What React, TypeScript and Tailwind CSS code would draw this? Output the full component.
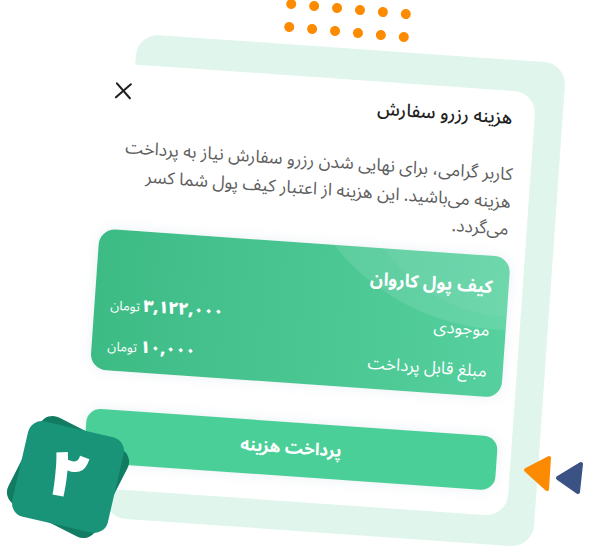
import { X } from "lucide-react";

const dots = Array.from({ length: 12 });

export default function App() {
  return (
    <div className="relative h-[556px] w-[592px] overflow-hidden bg-white font-['Noto_Sans_Arabic','DejaVu_Sans',sans-serif]">
      {/* orange dots */}
      <div className="absolute left-[285px] top-[4px] grid rotate-[5deg] grid-cols-6 gap-[13px]">
        {dots.map((_, i) => (
          <span key={i} className="h-[10px] w-[10px] rounded-full bg-[#fd8b02]" />
        ))}
      </div>

      {/* card stack, tilted */}
      <div className="pl-[120px] pt-[47px]">
        <div className="h-[485px] w-[430px] origin-[200px_243px] rotate-[4deg] rounded-[22px] bg-[#e0f6ec] pt-[31px]">
          <div dir="rtl" className="-ml-[38px] flex h-[425px] w-[440px] flex-col rounded-[22px] bg-white px-[14px]">
            {/* header */}
            <div className="mt-[13px] flex h-[28px] items-center justify-between">
              <h2 className="pr-[8px] text-[18px] font-medium text-[#1f1f1f]">هزینه رزرو سفارش</h2>
              <button className="flex h-[28px] w-[28px] items-center justify-center text-[#222]">
                <X size={28} strokeWidth={1.8} />
              </button>
            </div>

            <p className="mt-[29px] pr-[4px] text-[17.5px] leading-[27.5px] text-[#5e5e5e]">
              کاربر گرامی، برای نهایی شدن رزرو سفارش نیاز به پرداخت
              <br />
              هزینه می‌باشید. این هزینه از اعتبار کیف پول شما کسر
              <br />
              می‌گردد.
            </p>

            {/* wallet */}
            <div className="relative mt-[13px] h-[141px] overflow-hidden rounded-[16px] bg-linear-to-r from-[#3dbb85] to-[#55d09e] px-[16px] pt-[18px] text-white shadow-[0_0_12px_rgba(170,190,210,0.25)]">
              <div className="absolute left-[177px] top-[-373px] h-[446px] w-[446px] rounded-full bg-white/10" />
              <div className="absolute left-[250px] top-[-260px] h-[320px] w-[320px] rounded-full bg-white/5" />
              <div className="relative text-[18px] font-bold leading-[26px]">کیف پول کاروان</div>
              <div className="relative mt-[18px] flex items-center justify-between leading-[26px]">
                <span className="text-[17px]">موجودی</span>
                <span className="text-[13px]">
                  <b className="text-[17px] font-black">۳,۱۲۲,۰۰۰</b> تومان
                </span>
              </div>
              <div className="relative mt-[14px] flex items-center justify-between leading-[26px]">
                <span className="text-[17px]">مبلغ قابل پرداخت</span>
                <span className="text-[13px]">
                  <b className="text-[17px] font-black">۱۰,۰۰۰</b> تومان
                </span>
              </div>
            </div>

            <button className="mt-[39px] flex h-[54px] items-center justify-center rounded-[14px] bg-[#4bcf98] text-[17px] font-bold text-white shadow-[0_0_12px_rgba(170,190,210,0.25)]">
              پرداخت هزینه
            </button>
          </div>
        </div>
      </div>

      {/* arrows */}
      <svg className="absolute left-[520px] top-[453px]" width="72" height="45" viewBox="0 0 72 45">
        <path d="M6 17 L29 5 L27 36 Z" fill="#fd8b02" stroke="#fd8b02" strokeWidth="4" strokeLinejoin="round" />
        <path d="M38 25 L61 11 L58 39 Z" fill="#3b5285" stroke="#3b5285" strokeWidth="4" strokeLinejoin="round" />
      </svg>

      {/* step badge */}
      <div className="absolute left-[19px] top-[428px] h-[98px] w-[98px]">
        <div className="absolute inset-0 rotate-[27deg] rounded-[14px] bg-[#117c62]" />
        <div className="absolute inset-0 flex rotate-[13deg] items-center justify-center rounded-[14px] bg-[#1a9479]">
          <span className="text-[64px] font-black leading-none text-white">۲</span>
        </div>
      </div>
    </div>
  );
}
